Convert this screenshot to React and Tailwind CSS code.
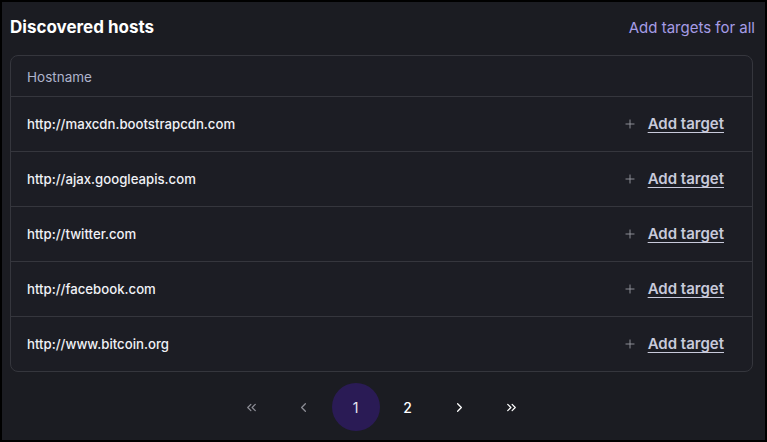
import { Plus, ChevronLeft, ChevronRight, ChevronsLeft, ChevronsRight } from "lucide-react";

const hosts = [
  "http://maxcdn.bootstrapcdn.com",
  "http://ajax.googleapis.com",
  "http://twitter.com",
  "http://facebook.com",
  "http://www.bitcoin.org",
];

function HostRow({ host }) {
  return (
    <div className="flex items-center justify-between h-[55px] pl-[16px] pr-[28px] border-t border-[#35363d]">
      <span className="text-[13.2px] font-medium text-[#f0f1f6] pt-[2px]">{host}</span>
      <button className="flex items-center gap-[11px] text-[15px]">
        <Plus size={14} strokeWidth={1.5} className="text-[#9a9ba4]" />
        <span className="font-semibold text-[#c8cadb] underline underline-offset-[3px]">
          Add target
        </span>
      </button>
    </div>
  );
}

function Pager() {
  const btn = "w-[48px] h-[48px] rounded-full flex items-center justify-center";
  return (
    <div className="flex justify-center items-center gap-[4px] mt-[11px] pr-[4px]">
      <div className={`${btn} text-[#8d8e96]`}>
        <ChevronsLeft size={15} strokeWidth={2} />
      </div>
      <div className={`${btn} text-[#8d8e96]`}>
        <ChevronLeft size={15} strokeWidth={2} />
      </div>
      <div className={`${btn} bg-[#2a1b55] text-[14px] text-[#e8e8f0]`}>1</div>
      <div className={`${btn} text-[14px] font-medium text-white`}>2</div>
      <div className={`${btn} text-white`}>
        <ChevronRight size={15} strokeWidth={2} />
      </div>
      <div className={`${btn} text-white`}>
        <ChevronsRight size={15} strokeWidth={2} />
      </div>
    </div>
  );
}

export default function App() {
  return (
    <div
      className="w-[767px] h-[442px] bg-[#1b1c22] border-2 border-black px-[8px] pt-[12px] overflow-hidden"
      style={{ fontFamily: "Inter, 'Noto Sans', sans-serif" }}
    >
      <div className="flex items-center justify-between h-[28px] pr-[2px]">
        <h2 className="text-[17px] font-bold text-white">Discovered hosts</h2>
        <a className="text-[15px] text-[#a69ce6]">Add targets for all</a>
      </div>
      <div className="mt-[13px] mr-[4px] rounded-[8px] border border-[#35363d] bg-[#1c1d24]">
        <div className="h-[40px] flex items-center pl-[16px] pt-[2px] text-[13.5px] text-[#aeb3cc]">
          Hostname
        </div>
        {hosts.map((h) => (
          <HostRow key={h} host={h} />
        ))}
      </div>
      <Pager />
    </div>
  );
}
